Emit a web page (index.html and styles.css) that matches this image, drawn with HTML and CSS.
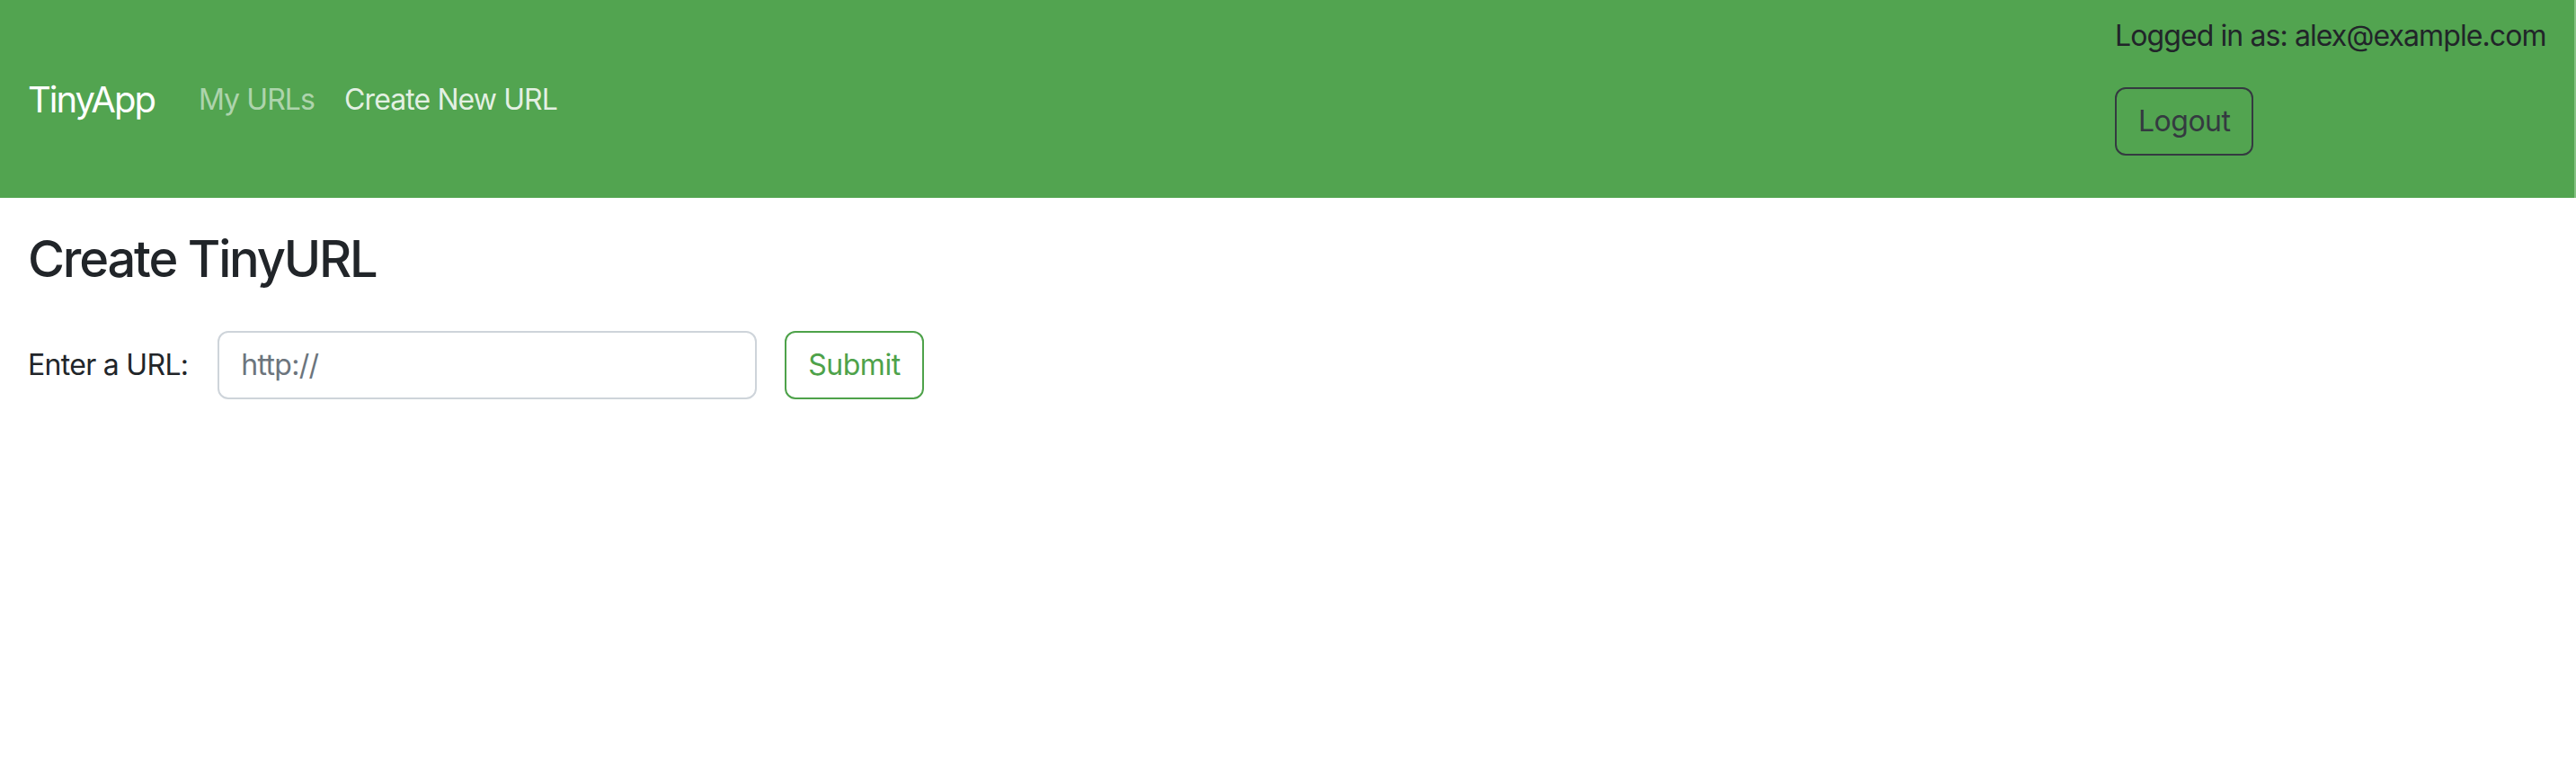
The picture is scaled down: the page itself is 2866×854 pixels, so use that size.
FILE: index.html
```html
<!DOCTYPE html>
<html lang="en">
<head>
<meta charset="utf-8">
<title>TinyApp</title>
<link rel="stylesheet" href="styles.css">
</head>
<body>
<nav class="navbar">
  <div class="nav-left">
    <a class="brand" href="#">TinyApp</a>
    <a class="nav-link" href="#">My URLs</a>
    <a class="nav-link active" href="#">Create New URL</a>
  </div>
  <div class="nav-right">
    <div class="user">Logged in as: alex@example.com</div>
    <form class="logout-form">
      <button type="button" class="btn btn-dark-outline">Logout</button>
    </form>
  </div>
</nav>
<main class="content">
  <h3 class="title">Create TinyURL</h3>
  <form class="url-form">
    <label class="label" for="longURL">Enter a URL:</label>
    <input class="input" id="longURL" type="text" placeholder="http://">
    <button type="button" class="btn btn-green-outline">Submit</button>
  </form>
</main>
</body>
</html>
```

FILE: styles.css
```css
* { box-sizing: border-box; }

html, body {
  margin: 0;
  padding: 0;
  background: #fff;
}

body {
  font-family: Inter, "Noto Sans", sans-serif;
  font-size: 32px;
  line-height: 1.5;
  letter-spacing: -0.7px;
  color: #212529;
}

.navbar {
  height: 220px;
  background: #52a450;
  border-right: 2px solid #84c182;
  display: flex;
  justify-content: space-between;
  align-items: stretch;
  padding: 0 31px 0 31px;
}

.nav-left {
  display: flex;
  align-items: center;
  padding-top: 2px;
}

.brand {
  font-size: 40px;
  letter-spacing: -2px;
  color: #fff;
  text-decoration: none;
  margin-right: 49px;
}

.nav-link {
  color: rgba(255, 255, 255, 0.55);
  text-decoration: none;
  letter-spacing: -0.9px;
  margin-right: 33px;
}

.nav-link.active {
  color: rgba(255, 255, 255, 0.85);
}

.nav-right {
  display: flex;
  flex-direction: column;
  align-items: flex-start;
  padding-top: 16px;
  width: 480px;
}

.user {
  color: #212529;
  white-space: nowrap;
  letter-spacing: -0.9px;
}

.logout-form {
  margin: 33px 0 0 0;
}

.btn {
  font-family: inherit;
  font-size: 32px;
  line-height: 1.5;
  letter-spacing: -0.5px;
  padding: 12px 24px;
  border-radius: 12px;
  border: 2px solid;
  background: transparent;
  cursor: pointer;
}

.btn-dark-outline {
  color: #343a40;
  border-color: #343a40;
}

.btn-green-outline {
  color: #4ea24a;
  border-color: #4ea24a;
}

.content {
  padding: 35px 31px 24px;
}

.title {
  font-size: 56px;
  font-weight: 500;
  line-height: 1.2;
  letter-spacing: -2.2px;
  margin: 0 0 46px 0;
}

.url-form {
  display: flex;
  align-items: center;
}

.label {
  margin-right: 33px;
}

.input {
  width: 600px;
  font-family: inherit;
  font-size: 32px;
  line-height: 1.5;
  letter-spacing: -0.7px;
  padding: 12px 24px;
  border: 2px solid #ced4da;
  border-radius: 12px;
  color: #212529;
  margin-right: 31px;
}

.input::placeholder {
  color: #6c757d;
}
```
